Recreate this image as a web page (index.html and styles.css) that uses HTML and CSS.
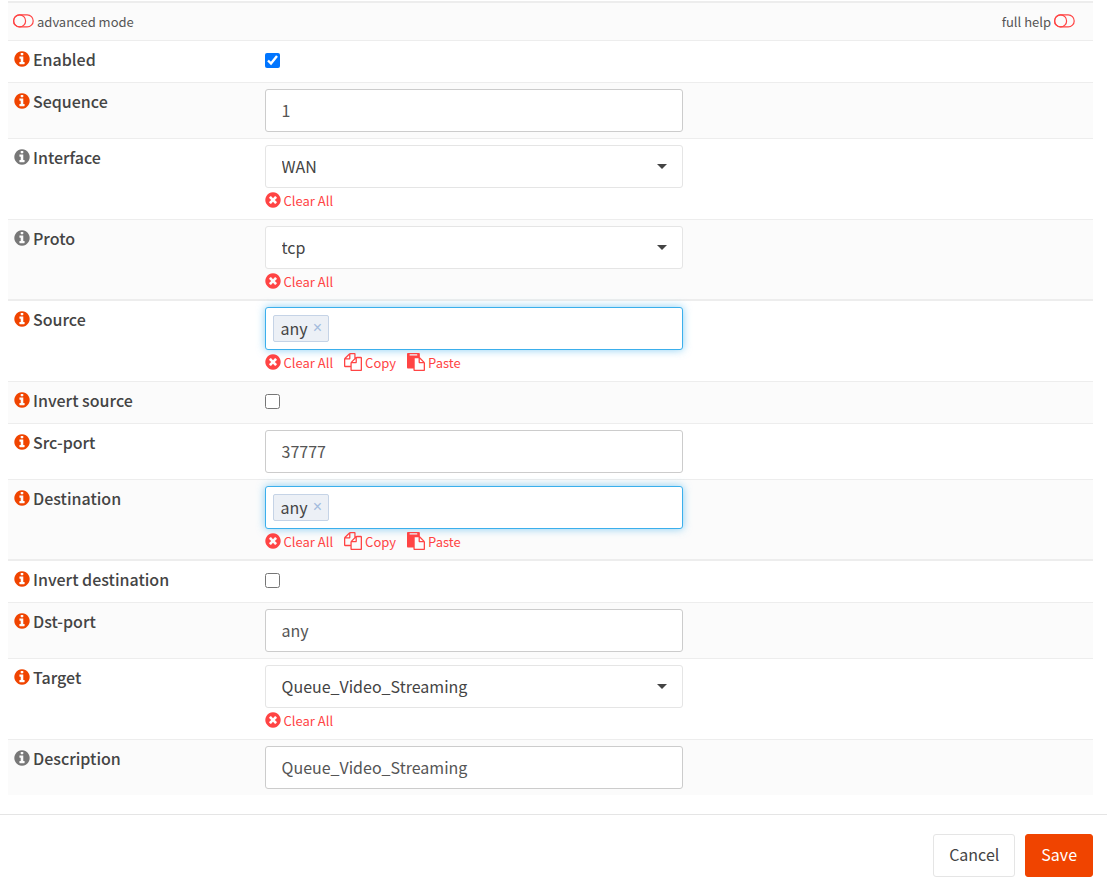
FILE: index.html
```html
<!DOCTYPE html>
<html lang="en">
<head>
    <meta charset="UTF-8">
    <meta name="viewport" content="width=device-width, initial-scale=1.0">
    <title>Edit rule</title>
    <link rel="stylesheet" href="styles.css">
</head>
<body>
    <!-- Icon sprite -->
    <svg class="sprite" aria-hidden="true">
        <symbol id="info" viewBox="98 98 1596 1596">
            <path d="M1152 1376v-160q0-14-9-23t-23-9h-96v-512q0-14-9-23t-23-9h-320q-14 0-23 9t-9 23v160q0 14 9 23t23 9h96v320h-96q-14 0-23 9t-9 23v160q0 14 9 23t23 9h448q14 0 23-9t9-23zm-128-896v-160q0-14-9-23t-23-9h-192q-14 0-23 9t-9 23v160q0 14 9 23t23 9h192q14 0 23-9t9-23zm640 416q0 209-103 385.5t-279.5 279.5-385.5 103-385.5-103-279.5-279.5-103-385.5 103-385.5 279.5-279.5 385.5-103 385.5 103 279.5 279.5 103 385.5z"/>
        </symbol>
        <symbol id="clear" viewBox="98 98 1596 1596">
            <path d="M1277 1122q0-26-19-45l-181-181 181-181q19-19 19-45 0-27-19-46l-90-90q-19-19-46-19-26 0-45 19l-181 181-181-181q-19-19-45-19-27 0-46 19l-90 90q-19 19-19 46 0 26 19 45l181 181-181 181q-19 19-19 45 0 27 19 46l90 90q19 19 46 19 26 0 45-19l181-181 181 181q19 19 45 19 27 0 46-19l90-90q19-19 19-46zm387-226q0 209-103 385.5t-279.5 279.5-385.5 103-385.5-103-279.5-279.5-103-385.5 103-385.5 279.5-279.5 385.5-103 385.5 103 279.5 279.5 103 385.5z"/>
        </symbol>
        <symbol id="copy" viewBox="0 0 1792 1792">
            <path d="M1696 384q40 0 68 28t28 68v1216q0 40-28 68t-68 28h-960q-40 0-68-28t-28-68v-288h-544q-40 0-68-28t-28-68v-672q0-40 20-88t48-76l408-408q28-28 76-48t88-20h416q40 0 68 28t28 68v328q68-40 128-40h416zm-544 213l-299 299h299v-299zm-640-384l-299 299h299v-299zm196 647l316-316v-416h-384v416q0 40-28 68t-68 28h-416v640h512v-256q0-40 20-88t48-76zm956 804v-1152h-384v416q0 40-28 68t-68 28h-416v640h896z"/>
        </symbol>
        <symbol id="paste" viewBox="0 0 1792 1792">
            <path d="M768 1664h896v-640h-416q-40 0-68-28t-28-68v-416h-384v1152zm256-1440v-64q0-13-9.5-22.5t-22.5-9.5h-704q-13 0-22.5 9.5t-9.5 22.5v64q0 13 9.5 22.5t22.5 9.5h704q13 0 22.5-9.5t9.5-22.5zm256 672h299l-299-299v299zm512 128v672q0 40-28 68t-68 28h-960q-40 0-68-28t-28-68v-160h-544q-40 0-68-28t-28-68v-1344q0-40 28-68t68-28h1088q40 0 68 28t28 68v328q21 13 36 28l408 408q28 28 48 76t20 88z"/>
        </symbol>
        <symbol id="toggle" viewBox="0 0 21 14">
            <rect x="0.6" y="0.9" width="19.6" height="12" rx="6" fill="none" stroke="currentColor" stroke-width="1.2"/>
            <circle cx="6.6" cy="6.9" r="6" fill="none" stroke="currentColor" stroke-width="1.2"/>
        </symbol>
        <symbol id="caret" viewBox="0 0 10 5">
            <path d="M0 0h10L5 5z"/>
        </symbol>
    </svg>

    <form>
        <div class="fields">
            <div class="row head">
                <a href="#"><svg class="toggle"><use href="#toggle"/></svg> <span>advanced mode</span></a>
                <a href="#"><span>full help</span> <svg class="toggle"><use href="#toggle"/></svg></a>
            </div>

            <div class="row">
                <label for="enabled"><svg class="info"><use href="#info"/></svg>Enabled</label>
                <div class="value"><input type="checkbox" id="enabled" checked></div>
            </div>
            <div class="row">
                <label for="sequence"><svg class="info"><use href="#info"/></svg>Sequence</label>
                <div class="value"><input type="text" class="control" id="sequence" value="1"></div>
            </div>
            <div class="row">
                <label for="interface"><svg class="info muted"><use href="#info"/></svg>Interface</label>
                <div class="value">
                    <div class="picker">
                        <select class="control" id="interface"><option>WAN</option></select>
                        <svg class="caret"><use href="#caret"/></svg>
                    </div>
                    <div class="links">
                        <a href="#"><svg class="round"><use href="#clear"/></svg>Clear All</a>
                    </div>
                </div>
            </div>
            <div class="row last">
                <label for="proto"><svg class="info muted"><use href="#info"/></svg>Proto</label>
                <div class="value">
                    <div class="picker">
                        <select class="control" id="proto"><option>tcp</option></select>
                        <svg class="caret"><use href="#caret"/></svg>
                    </div>
                    <div class="links">
                        <a href="#"><svg class="round"><use href="#clear"/></svg>Clear All</a>
                    </div>
                </div>
            </div>
            <div class="row">
                <label for="source"><svg class="info"><use href="#info"/></svg>Source</label>
                <div class="value">
                    <div class="control tokens">
                        <span class="token">any <button type="button" aria-label="Remove any">×</button></span>
                        <input type="text" id="source">
                    </div>
                    <div class="links">
                        <a href="#"><svg class="round"><use href="#clear"/></svg>Clear All</a>
                        <a href="#"><svg class="wide"><use href="#copy"/></svg>Copy</a>
                        <a href="#"><svg class="wide"><use href="#paste"/></svg>Paste</a>
                    </div>
                </div>
            </div>
            <div class="row">
                <label for="invert-source"><svg class="info"><use href="#info"/></svg>Invert source</label>
                <div class="value"><input type="checkbox" id="invert-source"></div>
            </div>
            <div class="row">
                <label for="src-port"><svg class="info"><use href="#info"/></svg>Src-port</label>
                <div class="value"><input type="text" class="control" id="src-port" value="37777"></div>
            </div>
            <div class="row last">
                <label for="destination"><svg class="info"><use href="#info"/></svg>Destination</label>
                <div class="value">
                    <div class="control tokens">
                        <span class="token">any <button type="button" aria-label="Remove any">×</button></span>
                        <input type="text" id="destination">
                    </div>
                    <div class="links">
                        <a href="#"><svg class="round"><use href="#clear"/></svg>Clear All</a>
                        <a href="#"><svg class="wide"><use href="#copy"/></svg>Copy</a>
                        <a href="#"><svg class="wide"><use href="#paste"/></svg>Paste</a>
                    </div>
                </div>
            </div>
            <div class="row">
                <label for="invert-destination"><svg class="info"><use href="#info"/></svg>Invert destination</label>
                <div class="value"><input type="checkbox" id="invert-destination"></div>
            </div>
            <div class="row">
                <label for="dst-port"><svg class="info"><use href="#info"/></svg>Dst-port</label>
                <div class="value"><input type="text" class="control" id="dst-port" value="any"></div>
            </div>
            <div class="row">
                <label for="target"><svg class="info"><use href="#info"/></svg>Target</label>
                <div class="value">
                    <div class="picker">
                        <select class="control" id="target"><option>Queue_Video_Streaming</option></select>
                        <svg class="caret"><use href="#caret"/></svg>
                    </div>
                    <div class="links">
                        <a href="#"><svg class="round"><use href="#clear"/></svg>Clear All</a>
                    </div>
                </div>
            </div>
            <div class="row">
                <label for="description"><svg class="info muted"><use href="#info"/></svg>Description</label>
                <div class="value"><input type="text" class="control" id="description" value="Queue_Video_Streaming"></div>
            </div>
        </div>

        <div class="footer">
            <button type="button" class="btn">Cancel</button>
            <button type="submit" class="btn primary">Save</button>
        </div>
    </form>
</body>
</html>
```
FILE: styles.css
```css
/* General */
* {
    box-sizing: border-box;
}

body {
    margin: 0;
    font-family: "Noto Sans CJK SC", "Noto Sans", sans-serif;
    font-size: 16px;
    line-height: 24px;
    color: #444;
    background: #fff;
}

input,
select,
button {
    font: inherit;
    color: inherit;
}

svg {
    fill: currentColor;
    flex: none;
}

.sprite {
    position: absolute;
    width: 0;
    height: 0;
}

/* Rows */
.fields {
    margin: 1px 14px 0 8px;
}

.row {
    display: grid;
    grid-template-columns: 23% 1fr;
    border-top: 1px solid #ededed;
    padding: 6px 0;
}

.row:nth-child(odd) {
    background: #fbfbfb;
}

.row.last {
    border-bottom: 1px solid #ededed;
    padding-bottom: 5px;
}

.row.head {
    display: flex;
    justify-content: space-between;
    border-top-width: 2px;
    padding: 7px 18px 6px 5px;
    font-size: 13px;
}

.head a {
    display: flex;
    align-items: center;
    gap: 3px;
    color: #ff4444;
    text-decoration: none;
}

.head span {
    color: #555;
}

.toggle {
    width: 21px;
    height: 14px;
    margin-bottom: 2px;
}

label {
    display: flex;
    align-items: center;
    align-self: start;
    gap: 3px;
    padding-left: 6px;
    font-weight: 500;
}

.info {
    width: 16px;
    height: 16px;
    color: #f04400;
}

.info.muted {
    color: #777;
}

/* Controls */
.value {
    padding: 0 7px;
}

input[type="checkbox"] {
    display: block;
    width: 15px;
    height: 15px;
    margin: 6px 0 8px;
}

.control {
    display: block;
    width: 100%;
    max-width: 418px;
    height: 43px;
    padding: 0 16px 2px;
    border: 1px solid #ccc;
    border-radius: 3px;
    background: #fff;
    color: #555;
}

.picker {
    position: relative;
    max-width: 418px;
}

select.control {
    appearance: none;
    border-color: #e5e5e5;
    color: #444;
}

.caret {
    position: absolute;
    right: 16px;
    top: 19px;
    width: 10px;
    height: 5px;
    pointer-events: none;
}

.tokens {
    display: flex;
    align-items: center;
    gap: 4px;
    padding: 0 7px;
    border-color: #3bafec;
    box-shadow: 0 0 8px rgba(59, 175, 236, 0.6);
}

.token {
    display: flex;
    align-items: center;
    gap: 5px;
    height: 27px;
    padding: 0 6px 2px 7px;
    border: 1px solid #c5d3e6;
    border-radius: 2px;
    background: #ecf0f6;
    color: #444;
}

.token button {
    padding: 0;
    border: 0;
    background: none;
    color: #a3bbdd;
    font-family: "Liberation Sans", sans-serif;
}

.tokens input {
    flex: 1;
    min-width: 0;
    border: 0;
    outline: 0;
    background: none;
}

.links {
    display: flex;
    gap: 11px;
    height: 25px;
}

.links a {
    display: flex;
    align-items: center;
    gap: 3px;
    color: #ff4444;
    font-size: 13px;
    text-decoration: none;
}

.links svg {
    margin-bottom: 2px;
}

.round {
    width: 16px;
    height: 16px;
}

.wide {
    width: 18px;
    height: 18px;
}

/* Footer */
.footer {
    display: flex;
    justify-content: flex-end;
    gap: 10px;
    margin-top: 19px;
    padding: 19px 14px 11px;
    border-top: 1px solid #e5e5e5;
}

.btn {
    height: 43px;
    padding: 0 15px 3px;
    border: 1px solid #e5e5e5;
    border-radius: 3px;
    background: #fff;
}

.btn.primary {
    border-color: #f04400;
    background: #f04400;
    color: #fff;
}
```
